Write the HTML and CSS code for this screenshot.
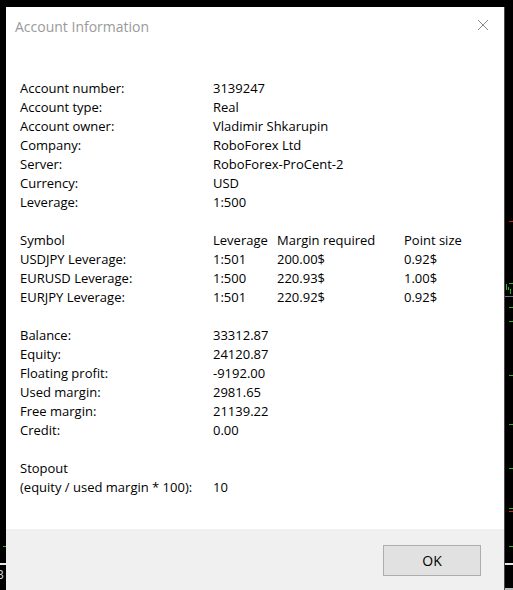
FILE: index.html
```html
<!DOCTYPE html>
<html>
<head>
<meta charset="utf-8">
<link rel="stylesheet" href="styles.css">
</head>
<body>
<div class="bg-left">
  <span class="tick green" style="top:546px"></span>
  <span class="hline white" style="top:563px"></span>
  <span class="edge-digit">3</span>
</div>
<div class="bg-right">
  <span class="tick red" style="top:221px"></span>
  <span class="candle" style="top:284px;left:1px;height:6px"></span>
  <span class="candle" style="top:287px;left:3px;height:3px"></span>
  <span class="candle" style="top:289px;left:5px;height:5px"></span>
  <span class="tick green" style="top:283px"></span>
  <span class="hline slate" style="top:296px"></span>
  <span class="tick green" style="top:307px"></span>
  <span class="tick green" style="top:321px"></span>
  <span class="tick green" style="top:375px"></span>
  <span class="tick green" style="top:424px"></span>
  <span class="tick green" style="top:468px"></span>
  <span class="tick green" style="top:508px"></span>
  <span class="tick red" style="top:511px"></span>
  <span class="tick green" style="top:546px"></span>
  <span class="hline white" style="top:563px"></span>
  <span class="hline grey" style="top:588px"></span>
</div>
<div class="dialog">
  <div class="titlebar">
    <span class="title">Account Information</span>
    <svg class="close" width="12" height="12" viewBox="0 0 12 12"><path d="M1 1L11 11M11 1L1 11" stroke="#8a8a8a" stroke-width="1" fill="none"/></svg>
  </div>
  <div class="content">
    <div class="grid info">
      <span>Account number:</span><span>3139247</span>
      <span>Account type:</span><span>Real</span>
      <span>Account owner:</span><span>Vladimir Shkarupin</span>
      <span>Company:</span><span>RoboForex Ltd</span>
      <span>Server:</span><span>RoboForex-ProCent-2</span>
      <span>Currency:</span><span>USD</span>
      <span>Leverage:</span><span>1:500</span>
    </div>
    <div class="grid symbols">
      <span>Symbol</span><span>Leverage</span><span>Margin required</span><span>Point size</span>
      <span>USDJPY Leverage:</span><span>1:501</span><span>200.00$</span><span>0.92$</span>
      <span>EURUSD Leverage:</span><span>1:500</span><span>220.93$</span><span>1.00$</span>
      <span>EURJPY Leverage:</span><span>1:501</span><span>220.92$</span><span>0.92$</span>
    </div>
    <div class="grid info">
      <span>Balance:</span><span>33312.87</span>
      <span>Equity:</span><span>24120.87</span>
      <span>Floating profit:</span><span>-9192.00</span>
      <span>Used margin:</span><span>2981.65</span>
      <span>Free margin:</span><span>21139.22</span>
      <span>Credit:</span><span>0.00</span>
    </div>
    <div class="grid info">
      <span>Stopout</span><span></span>
      <span>(equity / used margin * 100):</span><span>10</span>
    </div>
  </div>
  <div class="footer">
    <button class="ok">OK</button>
  </div>
</div>
</body>
</html>
```
FILE: styles.css
```css
html, body {
  margin: 0;
  padding: 0;
  background: #000;
  width: 513px;
  height: 590px;
  overflow: hidden;
}
body {
  position: relative;
  font-family: "Open Sans", "Noto Sans", sans-serif;
  font-size: 13px;
  color: #000;
}
.bg-left {
  position: absolute;
  left: 0;
  top: 0;
  width: 6px;
  height: 590px;
  overflow: hidden;
}
.bg-right {
  position: absolute;
  left: 505px;
  top: 0;
  width: 8px;
  height: 590px;
}
.tick {
  position: absolute;
  right: 0;
  width: 4px;
  height: 1px;
}
.bg-left .tick { left: 3px; width: 3px; }
.green { background: #1fbf1f; }
.red { background: #e01818; }
.candle {
  position: absolute;
  width: 1px;
  background: #1fbf1f;
}
.hline {
  position: absolute;
  left: 0;
  right: 0;
  height: 1px;
}
.white { background: #e8e8e8; height: 2px; }
.slate { background: #6d7a8c; }
.grey { background: #bbb; height: 2px; }
.edge-digit {
  position: absolute;
  left: -3px;
  top: 567px;
  color: #ddd;
  font-size: 12px;
  line-height: 16px;
}
.dialog {
  position: absolute;
  left: 6px;
  top: 7px;
  width: 498px;
  height: 583px;
  background: #fff;
  border-right: 1px solid #4a4a4a;
  display: flex;
  flex-direction: column;
}
.titlebar {
  height: 40px;
  display: flex;
  align-items: center;
  justify-content: space-between;
  padding: 0 15px 0 9px;
  box-sizing: border-box;
}
.title {
  font-size: 14px;
  color: #9a9a9a;
  position: relative;
  top: -1px;
}
.close { position: relative; top: -2px; }
.content {
  flex: 1;
  padding: 32px 0 0 14px;
  display: flex;
  flex-direction: column;
  gap: 19px;
}
.grid {
  display: grid;
  line-height: 19px;
  white-space: nowrap;
}
.info { grid-template-columns: 193px auto; }
.symbols { grid-template-columns: 193px 64px 127px auto; }
.footer {
  height: 61px;
  background: #f0f0f0;
  display: flex;
  justify-content: flex-end;
  align-items: flex-start;
  padding: 16px 23px 0 0;
  box-sizing: border-box;
}
.ok {
  width: 98px;
  height: 31px;
  background: #e1e1e1;
  border: 1px solid #adadad;
  font-family: inherit;
  font-size: 14px;
  color: #000;
  padding: 0;
}
```
